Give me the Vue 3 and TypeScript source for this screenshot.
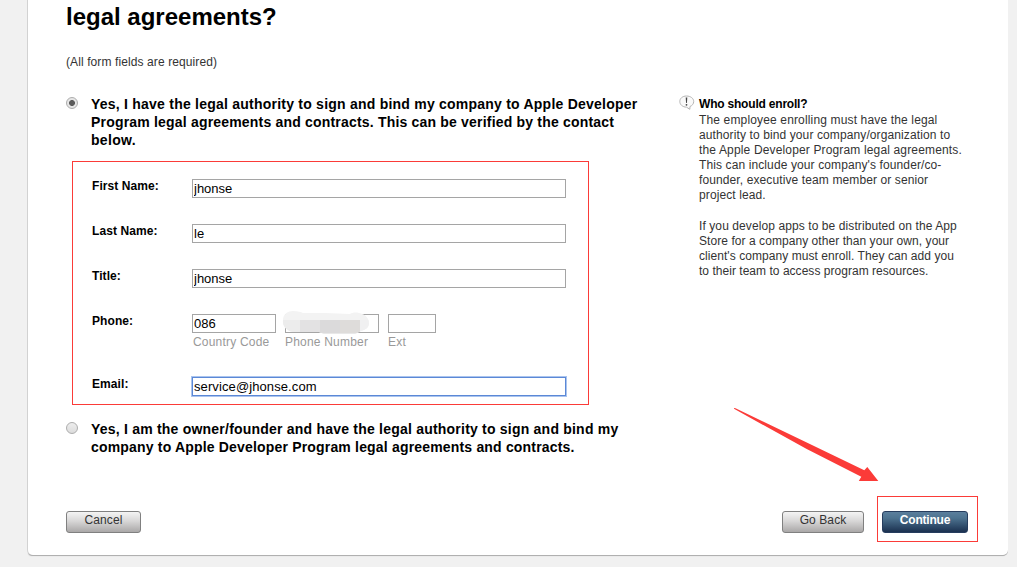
<script setup lang="ts">
import { ref } from 'vue'

interface TextField {
  id: string
  label: string
  value: string
}

interface Line {
  text: string
  fit: string
}

const authority = ref<'authorized' | 'owner'>('authorized')
const fields = ref<TextField[]>([
  { id: 'first', label: 'First Name:', value: 'jhonse' },
  { id: 'last', label: 'Last Name:', value: 'le' },
  { id: 'title', label: 'Title:', value: 'jhonse' },
])
const countryCode = ref('086')
const phone = ref('')
const ext = ref('')
const email = ref('service@jhonse.com')

const paragraphs: Line[][] = [
  [
    { text: 'The employee enrolling must have the legal', fit: 'f15' },
    { text: 'authority to bind your company/organization to', fit: 'f11' },
    { text: 'the Apple Developer Program legal agreements.', fit: 'f15' },
    { text: "This can include your company's founder/co-", fit: 'f11' },
    { text: 'founder, executive team member or senior', fit: 'f11' },
    { text: 'project lead.', fit: 'f11' },
  ],
  [
    { text: 'If you develop apps to be distributed on the App', fit: 'f09' },
    { text: 'Store for a company other than your own, your', fit: 'f06' },
    { text: "client's company must enroll. They can add you", fit: 'f06' },
    { text: 'to their team to access program resources.', fit: 'f03' },
  ],
]
</script>

<template>
  <div class="page">
    <main class="card">
      <h1 class="heading">legal agreements?</h1>
      <p class="note">(All form fields are required)</p>

      <div class="columns">
        <section class="form">
          <label class="option">
            <input v-model="authority" class="radio" type="radio" value="authorized" />
            <span class="option-text">
              <span class="line w1">Yes, I have the legal authority to sign and bind my company to Apple Developer</span>
              <span class="line w2">Program legal agreements and contracts. This can be verified by the contact</span>
              <span class="line">below.</span>
            </span>
          </label>

          <div class="fields">
            <div v-for="f in fields" :key="f.id" class="row">
              <label class="label" :for="f.id">{{ f.label }}</label>
              <input :id="f.id" v-model="f.value" class="input wide" type="text" />
            </div>
            <div class="row phone-row">
              <label class="label" for="country">Phone:</label>
              <div class="part country">
                <input id="country" v-model="countryCode" class="input" type="text" />
                <span class="hint">Country Code</span>
              </div>
              <div class="part number">
                <input v-model="phone" class="input" type="text" />
                <span class="hint">Phone Number</span>
                <svg class="mask" width="88" height="24" viewBox="0 0 88 24">
                  <defs>
                    <clipPath id="smudge">
                      <path d="M1 10C1 4 6 1 11 1C16 1 19 2 21 3L43 3L68 4C71 2 76 2 80 4C84 5 87 9 87 13C87 18 83 20 79 21L73 24H42L37 22H11C5 21 0 16 1 10Z" />
                    </clipPath>
                  </defs>
                  <g clip-path="url(#smudge)" shape-rendering="crispEdges">
                    <rect width="88" height="24" fill="#f3f3f3" />
                    <rect x="0" y="10" width="18" height="14" fill="#ececec" />
                    <rect x="18" y="10" width="20" height="14" fill="#e3e2e3" />
                    <rect x="38" y="10" width="20" height="13" fill="#dbdadb" />
                    <rect x="58" y="10" width="20" height="13" fill="#dedcda" />
                    <rect x="78" y="10" width="10" height="13" fill="#f0f0f1" />
                    <rect x="38" y="23" width="40" height="1" fill="#e8e8e8" />
                  </g>
                </svg>
              </div>
              <div class="part ext">
                <input v-model="ext" class="input" type="text" />
                <span class="hint">Ext</span>
              </div>
            </div>
            <div class="row email-row">
              <label class="label" for="email">Email:</label>
              <input id="email" v-model="email" class="input wide focused" type="text" />
            </div>
          </div>

          <label class="option second">
            <input v-model="authority" class="radio" type="radio" value="owner" />
            <span class="option-text">
              <span class="line w3">Yes, I am the owner/founder and have the legal authority to sign and bind my</span>
              <span class="line w4">company to Apple Developer Program legal agreements and contracts.</span>
            </span>
          </label>
        </section>

        <aside class="side">
          <svg class="bubble" width="16" height="16" viewBox="0 0 16 16">
            <path d="M7.500 1C3.600 1 .8 3.300 .8 6.500C.8 9.700 3.600 12 7.500 12.200L10.800 14.300L11 11.500C13.300 10.500 14.700 8.900 14.700 6.500C14.700 3.300 11.500 1 7.500 1Z" fill="#fafafa" stroke="#b5b5b5" />
            <path d="M6.700 2.600H8.300L7.900 8.100H7.100Z" fill="#444" />
            <circle cx="7.500" cy="9.800" r=".9" fill="#444" />
          </svg>
          <div class="side-text">
            <h2 class="side-title">Who should enroll?</h2>
            <p v-for="(lines, i) in paragraphs" :key="i" class="para">
              <span v-for="l in lines" :key="l.text" class="para-line" :class="l.fit">{{ l.text }}</span>
            </p>
          </div>
        </aside>
      </div>

      <footer class="actions">
        <button class="btn cancel" type="button">Cancel</button>
        <button class="btn back" type="button">Go Back</button>
        <div class="callout">
          <button class="btn primary" type="button">Continue</button>
        </div>
      </footer>

      <svg class="arrow" width="146" height="76" viewBox="0 0 146 76">
        <path d="M0 0L1.500 .2L74.300 35.300L130.300 62.300L133.300 59L144.300 73H124.800L127.300 68.700L72.700 41L0 .8Z" fill="#fb3b38" />
      </svg>
    </main>
  </div>
</template>

<style>
html,
body {
  margin: 0;
  overflow: hidden;
  background: #f1f1f1;
}
</style>

<style scoped>
.page {
  box-sizing: border-box;
  width: 1017px;
  height: 567px;
  padding: 0 9px 0 28px;
  overflow: hidden;
  background: #f1f1f1;
  color: #333;
  font: 12px/15px "Liberation Sans", Arial, sans-serif;
}
.card {
  position: relative;
  box-sizing: border-box;
  display: flex;
  flex-direction: column;
  height: 555px;
  padding: 0 30px 0 38px;
  background: #fff;
  border-radius: 0 0 5px 5px;
  box-shadow: -1px 0 0 #d2d2d2, 0 1px 0 #b0b0b0, -1px 2px 1px -1px rgba(0, 0, 0, 0.25);
}
.heading {
  margin: 3px 0 0;
  height: 28px;
  color: #000;
  font-size: 24px;
  line-height: 28px;
}
.note {
  margin: 24px 0 0;
  letter-spacing: 0.1px;
}
.columns {
  display: flex;
  height: 401px;
  margin-top: 25px;
}
.form {
  width: 613px;
  flex: none;
}
.option {
  display: flex;
}
.radio {
  appearance: none;
  flex: none;
  box-sizing: border-box;
  width: 12px;
  height: 12px;
  margin: 2px 13px 0 0;
  border: 1px solid #adadad;
  border-radius: 50%;
  background: linear-gradient(#ededed, #dcdcdc);
}
.radio:checked {
  background: radial-gradient(circle, #5c5c5c 0 2.6px, #e6e6e6 3.3px);
}
.line {
  display: block;
  width: max-content;
  white-space: nowrap;
  color: #000;
  font-size: 14px;
  font-weight: bold;
  line-height: 18px;
  letter-spacing: 0.3px;
}
.w1 {
  letter-spacing: 0.23px;
}
.w2 {
  letter-spacing: 0.19px;
}
.w3 {
  letter-spacing: 0.215px;
}
.w4 {
  letter-spacing: 0.18px;
}
.fields {
  box-sizing: border-box;
  width: 517px;
  height: 244px;
  margin: 12px 0 0 6px;
  padding: 17px 0 0 19px;
  border: 1px solid #fb3b38;
}
.row {
  display: flex;
  height: 45px;
}
.label {
  width: 100px;
  flex: none;
  color: #000;
  font-weight: bold;
  letter-spacing: 0.08px;
}
.input {
  display: block;
  box-sizing: border-box;
  width: 100%;
  height: 19px;
  padding: 0 1px 1px;
  border: 1px solid #a5a5a5;
  border-radius: 0;
  outline: none;
  background: #fff;
  color: #000;
  font: 13px/15px "Liberation Sans", Arial, sans-serif;
}
.wide {
  width: 374px;
}
.part {
  position: relative;
}
.country {
  width: 84px;
  margin-right: 9px;
}
.number {
  width: 94px;
  margin-right: 9px;
}
.ext {
  width: 48px;
}
.hint {
  display: block;
  margin-top: 2px;
  white-space: nowrap;
  color: #999;
  letter-spacing: 0.2px;
}
.country .hint {
  padding-left: 1px;
}
.mask {
  position: absolute;
  left: -3px;
  top: -4px;
}
.phone-row {
  height: 63px;
}
.focused {
  border-color: #5b88d6;
  box-shadow: 0 0 0 1px #aac4ee;
  letter-spacing: 0.1px;
}
.second {
  margin-top: 15px;
}
.side {
  display: flex;
}
.bubble {
  flex: none;
  margin: 0 4px 0 0;
}
.side-title {
  margin: 2px 0 1px;
  color: #000;
  font-size: 12px;
  line-height: 15px;
  letter-spacing: -0.2px;
}
.para {
  margin: 0 0 16px;
}
.para-line {
  display: block;
  white-space: nowrap;
}
.f15 {
  letter-spacing: 0.15px;
}
.f11 {
  letter-spacing: 0.11px;
}
.f09 {
  letter-spacing: 0.09px;
}
.f06 {
  letter-spacing: 0.06px;
}
.f03 {
  letter-spacing: 0.03px;
}
.actions {
  display: flex;
}
.btn {
  box-sizing: border-box;
  height: 22px;
  margin-top: 15px;
  padding: 0 0 4px;
  border: 1px solid #808080;
  border-radius: 3px;
  background: linear-gradient(#f4f4f4, #d8d7d7 45%, #aaa8a8);
  color: #333;
  font: 12px/16px "Liberation Sans", Arial, sans-serif;
  letter-spacing: 0.1px;
}
.cancel {
  width: 75px;
}
.back {
  width: 82px;
  margin-left: auto;
}
.callout {
  box-sizing: border-box;
  width: 101px;
  height: 46px;
  margin-left: 13px;
  padding: 14px 0 0 4px;
  border: 1px solid #fb3b38;
}
.primary {
  display: block;
  width: 86px;
  margin: 0;
  border-color: #263d5e;
  background: linear-gradient(#5b7f9d, #4d7390 30%, #1b3150);
  color: #fff;
  font-weight: bold;
  letter-spacing: -0.2px;
}
.arrow {
  position: absolute;
  left: 706px;
  top: 408px;
}
</style>
